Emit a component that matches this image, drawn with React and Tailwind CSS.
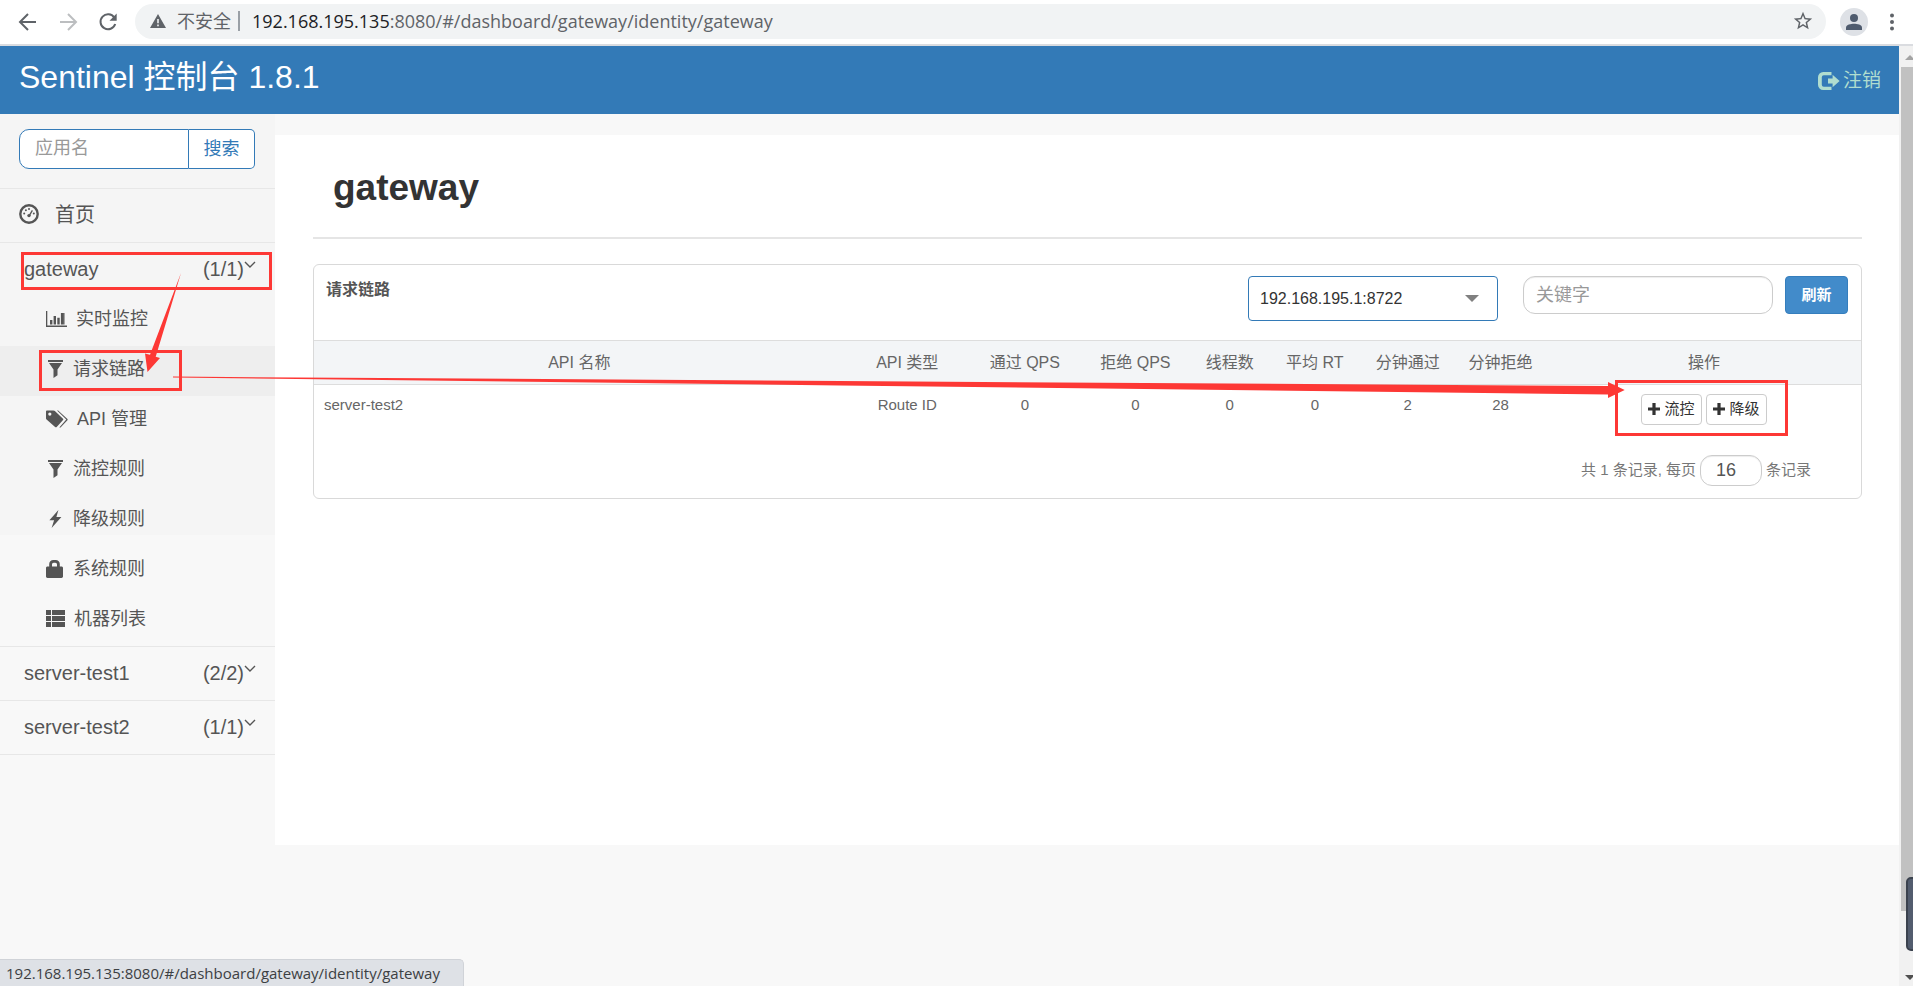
import React from "react";

const UI = "font-['Liberation_Sans','Noto_Sans_CJK_SC',sans-serif]";
const CHROME = "font-['Open_Sans','Noto_Sans_CJK_SC',sans-serif]";

function BackArrow({ className = "" }) {
  return (
    <svg viewBox="0 0 24 24" className={"h-6 w-6 " + className} fill="none" stroke="currentColor" strokeWidth="2">
      <path d="M20 12H4.5M12 4l-8 8 8 8" />
    </svg>
  );
}

function ReloadIcon() {
  return (
    <svg viewBox="0 0 24 24" className="h-6 w-6" fill="none" stroke="currentColor" strokeWidth="2">
      <path d="M18.3 7.6A7.5 7.5 0 1 0 19.2 14" />
      <path d="M20.7 3.6v7.2h-7.2z" fill="currentColor" stroke="none" />
    </svg>
  );
}

function WarningIcon() {
  return (
    <svg viewBox="0 0 16 14" className="h-[14px] w-4" fill="currentColor">
      <path fillRule="evenodd" d="M8 0l8 14H0zM7.2 5v4.3h1.6V5zM7.2 10.6v1.6h1.6v-1.6z" />
    </svg>
  );
}

function StarIcon() {
  return (
    <svg viewBox="0 0 24 24" className="h-[22px] w-[22px]" fill="currentColor">
      <path d="M22 9.24l-7.19-.62L12 2 9.19 8.63 2 9.24l5.46 4.73L5.82 21 12 17.27 18.18 21l-1.63-7.03L22 9.24zM12 15.4l-3.76 2.27 1-4.28-3.32-2.88 4.38-.38L12 6.1l1.71 4.04 4.38.38-3.32 2.88 1 4.28L12 15.4z" />
    </svg>
  );
}

function DashboardIcon() {
  return (
    <svg viewBox="0 0 20 20" className="mb-[3px] h-5 w-5" fill="none" stroke="currentColor">
      <circle cx="10" cy="10" r="8.7" strokeWidth="2.4" />
      <path d="M10.4 11.4l3-5" strokeWidth="1.3" />
      <g fill="currentColor" stroke="none">
        <circle cx="10" cy="11.6" r="1.7" />
        <circle cx="5.2" cy="9.6" r="1" />
        <circle cx="6.9" cy="6.3" r="1" />
        <circle cx="10" cy="4.9" r="1" />
        <circle cx="14.8" cy="9.6" r="1" />
      </g>
    </svg>
  );
}

function ChartIcon() {
  return (
    <svg viewBox="0 0 21 16" className="h-4 w-[21px]" fill="currentColor">
      <path d="M0 0h1.3v14.6H21V16H0zM4 9h2.4v4.4H4zM7.6 5H10v8.4H7.6zM11.3 6.7h2.4v6.7h-2.4zM14.9 2h2.6v11.4h-2.6zM17.6 2h.9v11.4h-.9z" />
    </svg>
  );
}

function FilterIcon() {
  return (
    <svg viewBox="0 0 18 18" className="h-[18px] w-[18px]" fill="currentColor">
      <path d="M2 0h15v2H2zM3 3h13l-4.5 6.6v5.6L7.5 18V9.6z" />
    </svg>
  );
}

function TagsIcon() {
  return (
    <svg viewBox="0 0 23 18" className="h-[18px] w-[22px]" fill="currentColor">
      <path fillRule="evenodd" d="M0 1.2C0 .5.5 0 1.2 0h6.6c.5 0 .9.2 1.2.5l8.8 8.2c.4.4.4 1 0 1.4l-6.6 7.3c-.4.4-1 .5-1.4.1L.6 9.4C.2 9 0 8.6 0 8.1zM4 2.2a1.7 1.7 0 1 0 0 3.4 1.7 1.7 0 0 0 0-3.4z" />
      <path d="M11.5 0h1.2l9.7 9c.4.4.4.8 0 1.2L15.2 18h-1.3l7.3-8.4z" />
    </svg>
  );
}

function FlashIcon() {
  return (
    <svg viewBox="0 0 18 18" className="h-[18px] w-[18px]" fill="currentColor">
      <path d="M12.4 0L3.4 10.2h4.7L5.6 18 15.4 6.9h-5z" />
    </svg>
  );
}

function LockIcon() {
  return (
    <svg viewBox="0 0 18 18" className="h-[18px] w-[18px]" fill="currentColor">
      <path fillRule="evenodd" d="M3.2 6.5V4.5A4.2 4.2 0 0 1 7.4 0h2.2a4.2 4.2 0 0 1 4.2 4.5v2h1.7c.8 0 1.5.6 1.5 1.4v8.7c0 .8-.7 1.4-1.5 1.4h-14C.7 18 0 17.4 0 16.6V7.9c0-.8.7-1.4 1.5-1.4zM6 6.5h5V4.6c0-1-.7-1.8-1.7-1.8H7.7C6.7 2.8 6 3.6 6 4.6z" />
    </svg>
  );
}

function ListIcon() {
  return (
    <svg viewBox="0 0 19 18" className="h-[18px] w-[19px]" fill="currentColor">
      <path d="M0 0h5v5H0zM6 0h13v5H6zM0 6h5v5H0zM6 6h13v5H6zM0 12h5v5H0zM6 12h13v5H6z" />
    </svg>
  );
}

function LogoutIcon() {
  return (
    <svg viewBox="0 0 22 18" className="h-[18px] w-[22px]" fill="currentColor">
      <path d="M13.5 0H5.2A5.2 5.2 0 0 0 0 5.2v7.6A5.2 5.2 0 0 0 5.2 18h8.3v-3.2H5.8a2 2 0 0 1-2-2V5.2a2 2 0 0 1 2-2h7.7z" />
      <path d="M10 6.4h4.6V2.8L21.6 9l-7 6.2v-3.6H10z" />
    </svg>
  );
}

function PlusIcon() {
  return (
    <svg viewBox="0 0 12 12" className="h-3 w-3" fill="currentColor">
      <path d="M4.4 0h3.2v4.4H12v3.2H7.6V12H4.4V7.6H0V4.4h4.4z" />
    </svg>
  );
}

function Chevron() {
  return (
    <svg viewBox="0 0 12 8" className="mb-[7px] h-2 w-3" fill="none" stroke="currentColor" strokeWidth="1.4">
      <path d="M1 1l5 5 5-5" />
    </svg>
  );
}

function AppRow({ name, count }) {
  return (
    <a href="#app" className="flex h-[54px] items-center border-t border-[#e7e7e7] pr-[19px] pb-[2px] pl-6 text-xl">
      <span className="flex-1">{name}</span>
      <span>{count}</span>
      <Chevron />
    </a>
  );
}

const MENU = [
  { label: "实时监控", Icon: ChartIcon },
  { label: "请求链路", Icon: FilterIcon, active: true },
  { label: "API 管理", Icon: TagsIcon },
  { label: "流控规则", Icon: FilterIcon },
  { label: "降级规则", Icon: FlashIcon },
  { label: "系统规则", Icon: LockIcon },
  { label: "机器列表", Icon: ListIcon },
];

function BrowserBar() {
  return (
    <div className={"flex h-[46px] items-center border-b-2 border-[#dadce0] bg-white pr-[9px] pb-px pl-4 text-lg text-[#5f6368] " + CHROME}>
      <div className="flex gap-4">
        <button aria-label="后退"><BackArrow /></button>
        <button aria-label="前进"><BackArrow className="rotate-180 text-[#bcbec0]" /></button>
        <button aria-label="重新加载"><ReloadIcon /></button>
      </div>
      <div className="ml-[15px] flex h-[35px] flex-1 items-center rounded-full bg-[#f1f3f4] pr-3 pb-px pl-[15px]">
        <WarningIcon />
        <span className="ml-[11px]">不安全</span>
        <span className="ml-[7px] h-5 w-[2px] bg-[#9aa0a6]" />
        <span className="ml-3 flex-1"><span className="text-[#202124]">192.168.195.135</span>:8080/#/dashboard/gateway/identity/gateway</span>
        <button aria-label="收藏"><StarIcon /></button>
      </div>
      <button aria-label="用户" className="ml-[14px] flex h-7 w-7 items-center justify-center rounded-full bg-[#dee1e6] text-[#4f5b6e]">
        <svg viewBox="0 0 16 16" className="h-4 w-4" fill="currentColor">
          <circle cx="8" cy="4" r="4" />
          <path d="M0 16v-2.5C0 10.7 5 9.7 8 9.7s8 1 8 3.8V16z" />
        </svg>
      </button>
      <button aria-label="菜单" className="ml-3 flex h-6 w-6 items-center justify-center">
        <svg viewBox="0 0 4 18" className="h-[18px] w-1" fill="currentColor">
          <circle cx="2" cy="2.5" r="2" /><circle cx="2" cy="9" r="2" /><circle cx="2" cy="15.5" r="2" />
        </svg>
      </button>
    </div>
  );
}

function Sidebar() {
  return (
    <nav className="w-[275px] shrink-0 bg-[linear-gradient(#f5f5f5_421px,#f8f8f8_421px)] text-[#555]">
      <form className="flex pt-[15px] pr-5 pb-[19px] pl-[19px] text-lg">
        <input aria-label="应用名" placeholder="应用名" className="h-10 w-[170px] rounded-l-[10px] border border-[#337ab7] bg-white px-[15px] pb-[2px] placeholder:text-[#999] placeholder:opacity-100" />
        <button type="button" className="h-10 flex-1 rounded-r-[5px] border border-l-0 border-[#337ab7] bg-white pb-px text-[#337ab7]">搜索</button>
      </form>
      <a href="#home" className="flex h-[54px] items-center gap-4 border-t border-[#e7e7e7] pb-px pl-[19px] text-xl">
        <DashboardIcon />
        <span>首页</span>
      </a>
      <AppRow name="gateway" count="(1/1)" />
      <ul className="text-lg">
        {MENU.map(({ label, Icon, active }) => (
          <li key={label}>
            <a href="#menu" className={"flex h-[50px] items-center gap-[9px] pb-1 pl-[46px] " + (active ? "bg-[#eee]" : "")}>
              <Icon />
              <span>{label}</span>
            </a>
          </li>
        ))}
      </ul>
      <AppRow name="server-test1" count="(2/2)" />
      <AppRow name="server-test2" count="(1/1)" />
      <div className="border-t border-[#e7e7e7]" />
    </nav>
  );
}

function ActionButton({ children }) {
  return (
    <button className="flex h-[31px] w-[61px] items-center justify-center gap-1 rounded-[4px] border border-[#ccc] bg-white pb-px text-[15px] text-[#333]">
      <PlusIcon />
      <span>{children}</span>
    </button>
  );
}

function ResourceCard() {
  return (
    <section className="mt-[25px] rounded-[6px] border border-[#d9d9d9] text-[15px] text-[#666]">
      <div className="flex h-[75px] items-start pt-[11px] pr-[13px] pl-3">
        <h2 className="flex-1 text-base leading-7 font-bold text-[#555]">请求链路</h2>
        <div className="relative">
          <select aria-label="机器" className="h-[45px] w-[250px] appearance-none rounded-[4px] border border-[#337ab7] bg-white px-[11px] text-base text-[#333]">
            <option>192.168.195.1:8722</option>
          </select>
          <svg viewBox="0 0 14 7" className="pointer-events-none absolute top-[19px] right-[19px] h-[7px] w-[14px]" fill="#808080">
            <path d="M0 0h14L7 7z" />
          </svg>
        </div>
        <input aria-label="关键字" placeholder="关键字" className="ml-[25px] h-[38px] w-[250px] rounded-[12px] border border-[#ccc] px-3 text-lg shadow-[inset_0_1px_1px_rgba(0,0,0,0.075)] placeholder:text-[#999] placeholder:opacity-100" />
        <button className="ml-3 h-[38px] w-[63px] rounded-[4px] border border-[#357ebd] bg-[#428bca] text-[15px] font-bold text-white">刷新</button>
      </div>
      <table className="w-full table-fixed border-collapse text-center">
        <colgroup>
          <col className="w-[34.3%]" />
          <col className="w-[8.1%]" />
          <col className="w-[7.1%]" />
          <col className="w-[7.2%]" />
          <col className="w-[5%]" />
          <col className="w-[6%]" />
          <col className="w-[6%]" />
          <col className="w-[6%]" />
          <col />
        </colgroup>
        <thead>
          <tr className="h-11 border-y border-[#ddd] bg-[#f3f5f7] text-base">
            {["API 名称", "API 类型", "通过 QPS", "拒绝 QPS", "线程数", "平均 RT", "分钟通过", "分钟拒绝", "操作"].map((h) => (
              <th key={h} className="p-0 font-normal">{h}</th>
            ))}
          </tr>
        </thead>
        <tbody>
          <tr className="h-[56px] align-top leading-[22px]">
            <td className="pt-[9px] pl-[10px] text-left">server-test2</td>
            {["Route ID", "0", "0", "0", "0", "2", "28"].map((v, i) => (
              <td key={i} className="pt-[9px]">{v}</td>
            ))}
            <td className="pt-[9px]">
              <div className="flex justify-center gap-1">
                <ActionButton>流控</ActionButton>
                <ActionButton>降级</ActionButton>
              </div>
            </td>
          </tr>
        </tbody>
      </table>
      <div className="flex items-center justify-end gap-1 pt-[14px] pr-[50px] pb-3 text-[#777]">
        <label htmlFor="page-size">共 1 条记录, 每页</label>
        <input id="page-size" defaultValue="16" className="h-[31px] w-[62px] rounded-[12px] border border-[#ccc] pr-[10px] text-center text-lg text-[#555] shadow-[inset_0_1px_1px_rgba(0,0,0,0.075)]" />
        <span>条记录</span>
      </div>
    </section>
  );
}

function Scrollbar() {
  return (
    <div className="flex w-[14px] shrink-0 flex-col overflow-hidden bg-[#f1f1f1] pl-[2px]">
      <svg viewBox="0 0 12 21" className="h-[21px] w-3" fill="#a3a3a3"><path d="M4 14l5-5 5 5z" /></svg>
      <div className="relative grow-[844] bg-[#c1c1c1]">
        <div className="absolute -bottom-10 left-[5px] h-[74px] w-5 rounded-[5px] border-2 border-[#3b424e] bg-[#525c6e]" />
      </div>
      <div className="grow-[58]" />
      <svg viewBox="0 0 12 17" className="h-[17px] w-3" fill="#505050"><path d="M4 6h10l-5 5z" /></svg>
    </div>
  );
}

function Annotations() {
  return (
    <svg viewBox="0 0 1913 986" className="pointer-events-none absolute top-0 left-0 h-[986px] w-[1913px]" fill="none" stroke="#fd3835" strokeWidth="3">
      <rect x="22.5" y="253.5" width="248" height="35" />
      <rect x="40.5" y="351.5" width="140" height="38" />
      <rect x="1616.5" y="381.5" width="170" height="53" />
      <g fill="#fd3835" stroke="none">
        <path d="M181 273L155.7 356.7l4.3 1.3L147.5 372 145 353.5l5 1.2z" />
        <path d="M173 376.6L840 381 1608 386v-4l16.7 8-16.7 8v-3.5L840 385.4 173 377.6z" />
      </g>
    </svg>
  );
}

export default function App() {
  return (
    <div className={"relative flex min-h-screen flex-col overflow-hidden bg-[#f8f8f8] " + UI}>
      <BrowserBar />
      <div className="flex flex-1">
        <div className="flex min-w-0 flex-1 flex-col">
          <header className="flex h-[68px] items-center justify-between bg-[#337ab7] pr-[18px] pl-[19px]">
            <h1 className="pb-[7px] text-[32px] leading-[48px] text-white">Sentinel 控制台 1.8.1</h1>
            <a href="#logout" className="flex items-center gap-[3px] pt-[2px] text-[19px] text-[#b0ddcf]">
              <LogoutIcon />
              <span>注销</span>
            </a>
          </header>
          <div className="flex flex-1">
            <Sidebar />
            <main className="mt-[21px] h-[710px] flex-1 bg-white pr-[37px] pl-[38px]">
              <h1 className="h-[104px] border-b-2 border-[#e5e5e5] pt-[25px] pl-5 text-[37px] leading-[56px] font-bold text-[#333]">gateway</h1>
              <ResourceCard />
            </main>
          </div>
        </div>
        <Scrollbar />
      </div>
      <div className={"absolute bottom-0 left-0 h-[27px] rounded-tr-[5px] border-t border-r border-[#d0d3d8] bg-[#dee1e6] pr-[23px] pl-[6px] text-[15px] leading-[26px] text-[#3c4043] " + CHROME}>
        192.168.195.135:8080/#/dashboard/gateway/identity/gateway
      </div>
      <Annotations />
    </div>
  );
}
